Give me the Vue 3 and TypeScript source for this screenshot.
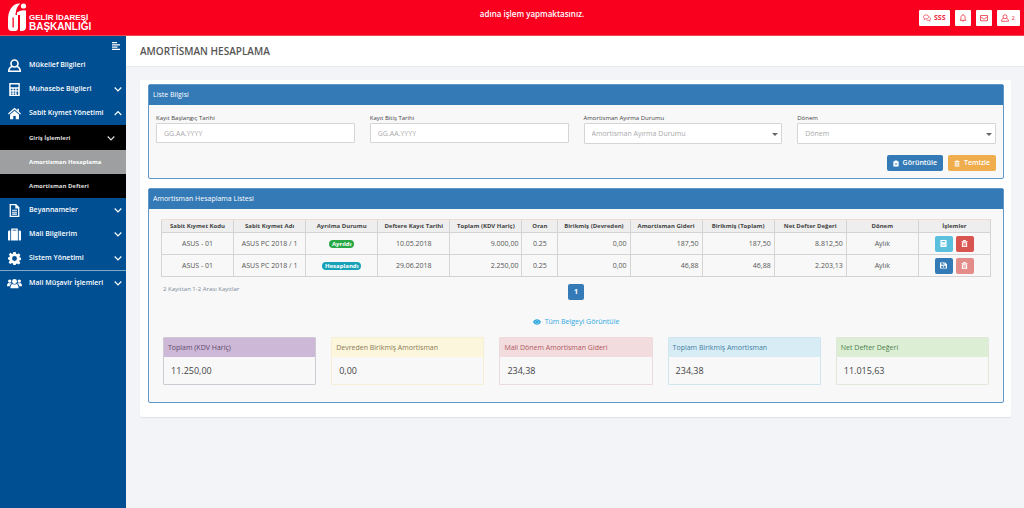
<script setup lang="ts">
import { ref } from 'vue'

type IconName =
  | 'user' | 'calc' | 'home' | 'file' | 'case' | 'gear' | 'users'

interface MenuItem {
  label: string
  icon: IconName
  chevron: 'down' | 'up' | ''
  separated?: boolean
  children?: { label: string; active?: boolean; chevron?: boolean }[]
}

interface AssetRow {
  code: string
  name: string
  status: string
  tone: string
  date: string
  total: string
  rate: string
  carried: string
  expense: string
  accumulated: string
  net: string
  period: string
  primary: 'calc' | 'save'
  removable: boolean
}

const menu: MenuItem[] = [
  { label: 'Mükellef Bilgileri', icon: 'user', chevron: '' },
  { label: 'Muhasebe Bilgileri', icon: 'calc', chevron: 'down' },
  {
    label: 'Sabit Kıymet Yönetimi',
    icon: 'home',
    chevron: 'up',
    children: [
      { label: 'Giriş İşlemleri', chevron: true },
      { label: 'Amortisman Hesaplama', active: true },
      { label: 'Amortisman Defteri' },
    ],
  },
  { label: 'Beyannameler', icon: 'file', chevron: 'down' },
  { label: 'Mali Bilgilerim', icon: 'case', chevron: 'down' },
  { label: 'Sistem Yönetimi', icon: 'gear', chevron: 'down' },
  { label: 'Mali Müşavir İşlemleri', icon: 'users', chevron: 'down', separated: true },
]

const columns = [
  'Sabit Kıymet Kodu', 'Sabit Kıymet Adı', 'Ayrılma Durumu', 'Deftere Kayıt Tarihi',
  'Toplam (KDV Hariç)', 'Oran', 'Birikmiş (Devreden)', 'Amortisman Gideri',
  'Birikmiş (Toplam)', 'Net Defter Değeri', 'Dönem', 'İşlemler',
]

const rows: AssetRow[] = [
  {
    code: 'ASUS - 01', name: 'ASUS PC 2018 / 1', status: 'Ayrıldı', tone: 'green', date: '10.05.2018',
    total: '9.000,00', rate: '0.25', carried: '0,00', expense: '187,50', accumulated: '187,50',
    net: '8.812,50', period: 'Aylık', primary: 'calc', removable: true,
  },
  {
    code: 'ASUS - 01', name: 'ASUS PC 2018 / 1', status: 'Hesaplandı', tone: 'teal', date: '29.06.2018',
    total: '2.250,00', rate: '0.25', carried: '0,00', expense: '46,88', accumulated: '46,88',
    net: '2.203,13', period: 'Aylık', primary: 'save', removable: false,
  },
]

const totals = [
  { label: 'Toplam (KDV Hariç)', value: '11.250,00', tone: 'purple' },
  { label: 'Devreden Birikmiş Amortisman', value: '0,00', tone: 'yellow' },
  { label: 'Mali Dönem Amortisman Gideri', value: '234,38', tone: 'red' },
  { label: 'Toplam Birikmiş Amortisman', value: '234,38', tone: 'blue' },
  { label: 'Net Defter Değeri', value: '11.015,63', tone: 'lime' },
]

const startDate = ref('')
const endDate = ref('')
const status = ref('')
const period = ref('')

function clearFilters() {
  startDate.value = ''
  endDate.value = ''
  status.value = ''
  period.value = ''
}
</script>

<template>
  <div class="page">
    <header class="topbar">
      <a class="brand" href="#">
        <svg class="logo" viewBox="0 0 19 29" aria-hidden="true">
          <path fill-rule="evenodd" d="M12.500.5C4 0 0 8 0 17v7q0 4 4 4h3q3 0 3-3V12H7.500C8 7 9 3 12.500.5zM4.500 14.500h1.300v10H4.500z" />
          <path d="M9 9.500q4-3 9-2V24q0 4-4.500 4H12V12H9z" />
          <circle cx="15.500" cy="3" r="2.600" />
        </svg>
        <span class="brand-text"><span class="brand-top">GELİR İDARESİ</span><span class="brand-bottom">BAŞKANLIĞI</span></span>
      </a>
      <p class="notice">adına işlem yapmaktasınız.</p>
      <div class="top-actions">
        <button type="button" class="top-btn">
          <svg viewBox="0 0 18 16" class="line"><path d="M7 1C3.500 1 1 3 1 5.500c0 1.500.8 2.700 2 3.500L2.500 11.500 5.500 10H7c3.500 0 6-2 6-4.500S10.500 1 7 1zM14.500 6c1.500.7 2.500 2 2.500 3.500 0 1.300-.7 2.400-1.800 3.100l.6 2.400-3-1.500c-2 .2-4-.5-5-1.500" /></svg>
          <strong>SSS</strong>
        </button>
        <button type="button" class="top-btn" aria-label="Bildirimler">
          <svg viewBox="0 0 16 16" class="line"><path d="M2 12.500c1.500-1.500 2-3 2-6C4 4 5.500 2 8 2s4 2 4 4.500c0 3 .5 4.500 2 6zM6.500 13c0 2 3 2 3 0M8 2V.5" /></svg>
        </button>
        <button type="button" class="top-btn" aria-label="Mesajlar">
          <svg viewBox="0 0 16 16" class="line"><path d="M1 3h14v10.500H1zM1 5.500l7 5 7-5" /></svg>
        </button>
        <button type="button" class="top-btn">
          <svg viewBox="0 0 16 16" class="line"><circle cx="8" cy="5.500" r="4" /><path d="M5 8.500C2.500 9.500 1 11 1 14.500h14c0-3.500-1.500-5-4-6" /></svg>
          <span class="user-count">2</span>
        </button>
      </div>
    </header>

    <div class="body">
      <aside class="sidebar">
        <button type="button" class="collapse" aria-label="Menüyü daralt">
          <svg viewBox="0 0 16 16"><path d="M0 0h10v2.500H0zM0 4.500h16V7H0zM0 9h11v2.500H0zM0 13.500h16V16H0z" /></svg>
        </button>
        <nav>
          <template v-for="item in menu" :key="item.label">
            <a href="#" class="item" :class="{ separated: item.separated }">
              <svg v-if="item.icon === 'user'" class="icon" viewBox="0 0 16 16"><g class="stroke"><circle cx="8" cy="5.500" r="4.300" /><path d="M5.300 9C2.500 10 1 11.500 1 15h14c0-3.500-1.500-5-4.300-6" /></g></svg>
              <svg v-else-if="item.icon === 'calc'" class="icon" viewBox="0 0 16 16"><path fill-rule="evenodd" d="M1.500 0h13v16h-13zM3.200 1.700v3.500h9.600V1.700zM3.500 7v2h2V7zm3.500 0v2h2V7zm3.500 0v2h2V7zm-7 3.500v1.500h2v-1.500zm3.500 0v1.500h2v-1.500zm3.500 0v4h2v-4zM3.500 13v1.500h2V13zM7 13v1.500h2V13z" /></svg>
              <svg v-else-if="item.icon === 'home'" class="icon" viewBox="0 0 16 16"><path d="M8 1l8 7-1 1.200L8 3.200 1 9.200 0 8zM8 4.500l5.500 4.800V15H9.500v-4h-3v4h-4V9.300z" /><path d="M11.500 2h2v4l-2-1.800z" /></svg>
              <svg v-else-if="item.icon === 'file'" class="icon" viewBox="0 0 16 16"><path fill-rule="evenodd" d="M2 0h8l4 4v12H2zM3.600 1.600v12.800h8.800V5.500H9V1.600zM5 7h6v1.400H5zm0 2.400h6v1.400H5zm0 2.400h6v1.400H5z" /></svg>
              <svg v-else-if="item.icon === 'case'" class="icon" viewBox="0 0 16 16"><path fill-rule="evenodd" d="M4 3V.5h8V3h.2v12.500H3.800V3zm1.700-.8V3h4.600v-.8zM0 4.500Q0 3 1.500 3h1.300v12.500H1.500Q0 15.500 0 14zM13.200 3h1.300Q16 3 16 4.500V14q0 1.500-1.500 1.500h-1.300z" /></svg>
              <svg v-else-if="item.icon === 'gear'" class="icon" viewBox="0 0 16 16"><path fill-rule="evenodd" d="M6.500 0h3l.4 2.200 1.500.6 1.800-1.300 2.100 2.100L14 5.400l.6 1.500 1.400.3v2.600l-1.700.4-.5 1.300 1.400 2-2 2-2-1.400-1.400.6L9.500 16h-3l-.4-1.900-1.400-.6-2 1.400-2-2 1.400-2-.6-1.300L0 9.300V6.700l1.800-.4.6-1.400L1 3l2-2 1.900 1.400 1.300-.5zM8 5a3 3 0 100 6 3 3 0 000-6z" /></svg>
              <svg v-else class="icon wide" viewBox="0 0 22 16"><circle cx="11" cy="5" r="3.600" /><path d="M5 15c0-4 1.500-6 3.300-6.300 1.700 1.200 3.700 1.200 5.400 0C15.500 9 17 11 17 15z" /><circle cx="4" cy="4.500" r="2.500" /><circle cx="18" cy="4.500" r="2.500" /><path d="M0 12c0-3 1-4.500 2.500-4.700 1 .6 2 .6 3.500 0l.8.8C5 9 4.200 10.500 4 12zM22 12c0-3-1-4.500-2.500-4.700-1 .6-2 .6-3.500 0l-.8.8C17 9 17.800 10.500 18 12z" /></svg>
              <span class="label">{{ item.label }}</span>
              <svg v-if="item.chevron" class="chevron" viewBox="0 0 8 8"><path :d="item.chevron === 'up' ? 'M.7 6L4 2.700 7.300 6' : 'M.7 2.500L4 5.800 7.300 2.500'" /></svg>
            </a>
            <div v-if="item.children" class="submenu">
              <a v-for="child in item.children" :key="child.label" href="#" class="subitem" :class="{ active: child.active }">
                <span class="label">{{ child.label }}</span>
                <svg v-if="child.chevron" class="chevron" viewBox="0 0 8 8"><path d="M.7 2.500L4 5.800 7.300 2.500" /></svg>
              </a>
            </div>
          </template>
        </nav>
      </aside>

      <main class="main">
        <h1 class="title">AMORTİSMAN HESAPLAMA</h1>
        <div class="card">
          <section class="panel">
            <h2 class="panel-head">Liste Bilgisi</h2>
            <form class="filters" @submit.prevent>
              <div class="fields">
                <div class="field">
                  <label for="start">Kayıt Başlangıç Tarihi</label>
                  <input id="start" v-model="startDate" type="text" placeholder="GG.AA.YYYY" />
                </div>
                <div class="field">
                  <label for="end">Kayıt Bitiş Tarihi</label>
                  <input id="end" v-model="endDate" type="text" placeholder="GG.AA.YYYY" />
                </div>
                <div class="field">
                  <label for="status">Amortisman Ayırma Durumu</label>
                  <div class="select">
                    <select id="status" v-model="status">
                      <option value="">Amortisman Ayırma Durumu</option>
                      <option>Ayrıldı</option>
                      <option>Hesaplandı</option>
                    </select>
                  </div>
                </div>
                <div class="field">
                  <label for="period">Dönem</label>
                  <div class="select">
                    <select id="period" v-model="period">
                      <option value="">Dönem</option>
                      <option>Aylık</option>
                    </select>
                  </div>
                </div>
              </div>
              <div class="form-actions">
                <button type="submit" class="btn blue">
                  <svg viewBox="0 0 16 16"><path fill-rule="evenodd" d="M1 2h4V0h6v2h4v14H1zM5 7v1.500h6V7zm0 3v1.500h6V10z" /></svg>
                  Görüntüle
                </button>
                <button type="button" class="btn orange" @click="clearFilters">
                  <svg viewBox="0 0 16 16"><path fill-rule="evenodd" d="M5 0h6v2h4v2H1V2h4zM2 5h12v11H2zM4.500 7v7H6V7zm2.800 0v7h1.400V7zM10 7v7h1.500V7z" /></svg>
                  Temizle
                </button>
              </div>
            </form>
          </section>

          <section class="panel">
            <h2 class="panel-head">Amortisman Hesaplama Listesi</h2>
            <div class="list">
              <table>
                <colgroup>
                  <col v-for="c in columns" :key="c" :class="c === 'Oran' ? 'narrow' : 'regular'" />
                </colgroup>
                <thead>
                  <tr><th v-for="c in columns" :key="c" scope="col">{{ c }}</th></tr>
                </thead>
                <tbody>
                  <tr v-for="row in rows" :key="row.date">
                    <td>{{ row.code }}</td>
                    <td>{{ row.name }}</td>
                    <td><span class="badge" :class="row.tone">{{ row.status }}</span></td>
                    <td>{{ row.date }}</td>
                    <td class="num">{{ row.total }}</td>
                    <td>{{ row.rate }}</td>
                    <td class="num">{{ row.carried }}</td>
                    <td class="num">{{ row.expense }}</td>
                    <td class="num">{{ row.accumulated }}</td>
                    <td class="num">{{ row.net }}</td>
                    <td>{{ row.period }}</td>
                    <td>
                      <div class="ops">
                        <button v-if="row.primary === 'calc'" type="button" class="op sky" aria-label="Hesapla">
                          <svg viewBox="0 0 16 16"><path fill-rule="evenodd" d="M1 0h14v16H1zM4 2.500V5h8V2.500zM4 9v1.200h2V9zm3 0v1.200h2V9zm3 0v1.200h2V9zm-6 3v1.200h2V12zm3 0v1.200h2V12zm3 0v1.200h2V12z" /></svg>
                        </button>
                        <button v-else type="button" class="op blue" aria-label="Kaydet">
                          <svg viewBox="0 0 16 16"><path fill-rule="evenodd" d="M0 1h12l4 4v10H0zM3 2.500v4h7v-4H8.500V5h-2V2.500zM3 8.500v5h10v-5zM6.500 9.500h3v3h-3z" /></svg>
                        </button>
                        <button type="button" class="op red" aria-label="Sil" :disabled="!row.removable">
                          <svg viewBox="0 0 16 16"><path fill-rule="evenodd" d="M5 0h6v2h4v2H1V2h4zM2 5h12v11H2zM4.500 7v7H6V7zm2.800 0v7h1.400V7zM10 7v7h1.500V7z" /></svg>
                        </button>
                      </div>
                    </td>
                  </tr>
                </tbody>
              </table>

              <div class="pager">
                <span class="count">2 Kayıttan 1-2 Arası Kayıtlar</span>
                <button type="button" class="page-btn">1</button>
              </div>

              <a class="view-all" href="#">
                <svg viewBox="0 0 18 12"><path fill-rule="evenodd" d="M0 6c2-3.500 5-6 9-6s7 2.500 9 6c-2 3.500-5 6-9 6S2 9.500 0 6zm9-3.500a3.500 3.500 0 100 7 3.500 3.500 0 000-7z" /><circle cx="9" cy="6" r="2.700" /></svg>
                Tüm Belgeyi Görüntüle
              </a>

              <div class="totals">
                <article v-for="t in totals" :key="t.label" class="total" :class="t.tone">
                  <h3>{{ t.label }}</h3>
                  <p>{{ t.value }}</p>
                </article>
              </div>
            </div>
          </section>
        </div>
      </main>
    </div>
  </div>
</template>

<style>
body {
  margin: 0;
  background: #f2f4f7;
}
</style>

<style scoped>
.page {
  display: flex;
  flex-direction: column;
  min-height: 100vh;
  font-family: "Open Sans", "Noto Sans", sans-serif;
  font-size: 7px;
  line-height: 10px;
  color: #555;
}
.page *,
.page *::before,
.page *::after {
  box-sizing: border-box;
}
button,
input,
select {
  font: inherit;
  margin: 0;
}
button {
  cursor: pointer;
}
a {
  text-decoration: none;
}
svg {
  display: block;
  flex: none;
  fill: currentColor;
}
h1,
h2,
h3,
p {
  margin: 0;
  font-weight: 400;
}

.topbar {
  display: grid;
  grid-template-columns: 1fr auto 1fr;
  align-items: center;
  height: 36px;
  padding: 0 4px 0 8px;
  background: #f9001f;
  color: #fff;
  border-bottom: 1px solid #f04a55;
}
.brand {
  display: flex;
  align-items: center;
  gap: 2px;
  color: #fff;
}
.logo {
  width: 19px;
  height: 29px;
}
.brand-text {
  padding-top: 9px;
  font-family: "Liberation Sans", Arial, sans-serif;
  line-height: 9px;
}
.brand-top,
.brand-bottom {
  display: block;
  font-size: 8px;
  font-weight: 700;
}
.brand-bottom {
  font-size: 10px;
}
.notice {
  padding: 0 0 8px 36px;
  font-size: 8px;
  font-weight: 600;
}
.top-actions {
  display: flex;
  justify-content: flex-end;
  gap: 5px;
}
.top-btn {
  display: flex;
  align-items: center;
  gap: 3px;
  height: 16px;
  padding: 0 4px;
  border: 0;
  border-radius: 1px;
  background: #fff;
  color: #e8283a;
  font-size: 7px;
}
.top-btn svg {
  width: 8px;
  height: 8px;
}
.top-btn .user-count {
  padding-right: 1px;
  font-size: 6px;
}
.line {
  fill: none;
  stroke: currentColor;
  stroke-width: 1.5;
}

.body {
  display: flex;
  flex: 1;
}
.sidebar {
  flex: none;
  width: 126px;
  background: #004f93;
  color: #fff;
}
.collapse {
  display: block;
  margin: 0 6px 0 auto;
  padding: 6px 0 3px;
  border: 0;
  background: none;
  color: #fff;
}
.collapse svg {
  width: 8px;
  height: 8px;
}
.item,
.subitem {
  display: flex;
  align-items: center;
  height: 24px;
  padding: 0 4px 0 8px;
  color: #fff;
  font-weight: 600;
}
.item.separated {
  height: 25px;
  border-top: 1px solid #7fa8ca;
}
.icon {
  width: 13px;
  height: 13px;
  margin-right: 8px;
}
.icon.wide {
  width: 15px;
  margin: 0 7px 0 -1px;
}
.stroke {
  fill: none;
  stroke: currentColor;
  stroke-width: 2;
}
.label {
  flex: 1;
  white-space: nowrap;
}
.chevron {
  width: 8px;
  height: 8px;
  fill: none;
  stroke: currentColor;
  stroke-width: 1.2;
}
.submenu {
  padding: 1px 0 0;
  background: #000;
}
.subitem {
  padding: 0 11px 0 29px;
  color: #ddd;
  font-size: 6px;
  font-weight: 700;
}
.subitem.active {
  background: #9d9fa1;
  color: #fff;
}

.main {
  flex: 1;
  min-width: 0;
}
.title {
  height: 31px;
  padding: 0 14px;
  background: #fff;
  border-bottom: 1px solid #e8eaed;
  font-size: 10px;
  font-weight: 600;
  line-height: 30px;
  color: #555;
}
.card {
  display: flex;
  flex-direction: column;
  gap: 9px;
  margin: 13px 13px 0 14px;
  padding: 4px 7px 14px 8px;
  background: #fff;
  border-radius: 2px;
  box-shadow: 0 1px 1px #dfe2e5;
}
.panel {
  border: 1px solid #5f97c8;
  border-radius: 2px;
  background: #f8f8f8;
}
.panel-head {
  padding: 0 4px;
  background: #337ab7;
  color: #fff;
  font-size: 7px;
  line-height: 20px;
}
.filters {
  padding: 9px 7px 7px;
}
.fields {
  display: grid;
  grid-template-columns: repeat(4, 1fr);
  gap: 15px;
  align-items: start;
}
.field label {
  display: block;
  font-size: 6px;
  line-height: 9px;
  color: #444;
}
.field input,
.field select {
  display: block;
  width: 100%;
  height: 20px;
  padding: 0 7px;
  border: 1px solid #d5d5d5;
  border-radius: 1px;
  background: #fff;
  color: #aaa;
  font-size: 7px;
  appearance: none;
  outline: none;
}
.field select {
  height: 21px;
}
.field input::placeholder {
  color: #aaa;
  opacity: 1;
}
.select {
  position: relative;
}
.select::after {
  content: "";
  position: absolute;
  right: 4px;
  top: 10px;
  border: 3px solid transparent;
  border-top-color: #666;
  border-bottom: 0;
  pointer-events: none;
}
.form-actions {
  display: flex;
  justify-content: flex-end;
  gap: 5px;
  padding-top: 11px;
}
.btn {
  display: flex;
  align-items: center;
  gap: 4px;
  height: 16px;
  padding: 0 6px;
  border: 0;
  border-radius: 2px;
  color: #fff;
  font-size: 7px;
  font-weight: 600;
}
.btn svg {
  width: 6px;
  height: 7px;
}
.blue {
  background: #337ab7;
}
.orange {
  background: #f0ad4e;
}

.list {
  padding: 10px 12px 17px;
}
table {
  width: 100%;
  table-layout: fixed;
  border-collapse: collapse;
  white-space: nowrap;
}
col.regular {
  width: 72px;
}
col.narrow {
  width: 36px;
}
th,
td {
  padding: 0 3px;
  border: 1px solid #d4d4d4;
  text-align: center;
}
th {
  height: 13px;
  background: #eee;
  border-top-color: #f1dcda;
  color: #444;
  font-size: 6px;
  line-height: 12px;
  font-weight: 700;
}
td {
  height: 22px;
}
.num {
  text-align: right;
}
.badge {
  display: inline-block;
  padding: 0 3px;
  border-radius: 4px;
  color: #fff;
  font-size: 6px;
  font-weight: 700;
  line-height: 8px;
}
.green {
  background: #28a745;
}
.teal {
  background: #17a2b8;
}
.ops {
  display: flex;
  justify-content: center;
  gap: 3px;
}
.op {
  display: grid;
  place-items: center;
  width: 18px;
  height: 16px;
  padding: 0;
  border: 0;
  border-radius: 2px;
  color: #fff;
}
.op svg {
  width: 7px;
  height: 7px;
}
.sky {
  background: #5bc0de;
}
.op.red {
  background: #d9534f;
}
.op:disabled {
  opacity: 0.65;
}
.pager {
  display: grid;
  grid-template-columns: 1fr auto 1fr;
  align-items: center;
  padding: 7px 2px 0;
}
.count {
  padding-bottom: 6px;
  font-size: 6px;
  color: #7a8a9c;
}
.page-btn {
  width: 16px;
  height: 16px;
  padding: 0;
  border: 0;
  border-radius: 2px;
  background: #337ab7;
  color: #fff;
  font-weight: 700;
}
.view-all {
  display: flex;
  align-items: center;
  justify-content: center;
  gap: 4px;
  width: max-content;
  margin: 17px auto 10px;
  color: #2fa8e0;
}
.view-all svg {
  width: 8px;
  height: 6px;
}
.totals {
  display: grid;
  grid-template-columns: repeat(5, 1fr);
  gap: 15px;
  padding: 0 2px;
}
.total {
  border: 1px solid;
  border-radius: 1px;
}
.total h3 {
  padding: 0 4px;
  font-size: 7px;
  line-height: 19px;
}
.total p {
  padding: 0 7px;
  font-size: 9px;
  line-height: 27px;
  color: #444;
}
.purple {
  border-color: #cfc9d3;
}
.purple h3 {
  background: #cdb8d8;
  color: #5d4b68;
}
.yellow {
  border-color: #f7efd5;
}
.yellow h3 {
  background: #fcf6dd;
  color: #8a7a55;
}
.total.red {
  border-color: #ecdcdd;
}
.total.red h3 {
  background: #f2dcde;
  color: #b05a60;
}
.total.blue {
  border-color: #cfe6ee;
  background: none;
}
.total.blue h3 {
  background: #d8ecf6;
  color: #3f7f9f;
}
.lime {
  border-color: #dfe8da;
}
.lime h3 {
  background: #dcefd4;
  color: #4d7f50;
}
</style>
